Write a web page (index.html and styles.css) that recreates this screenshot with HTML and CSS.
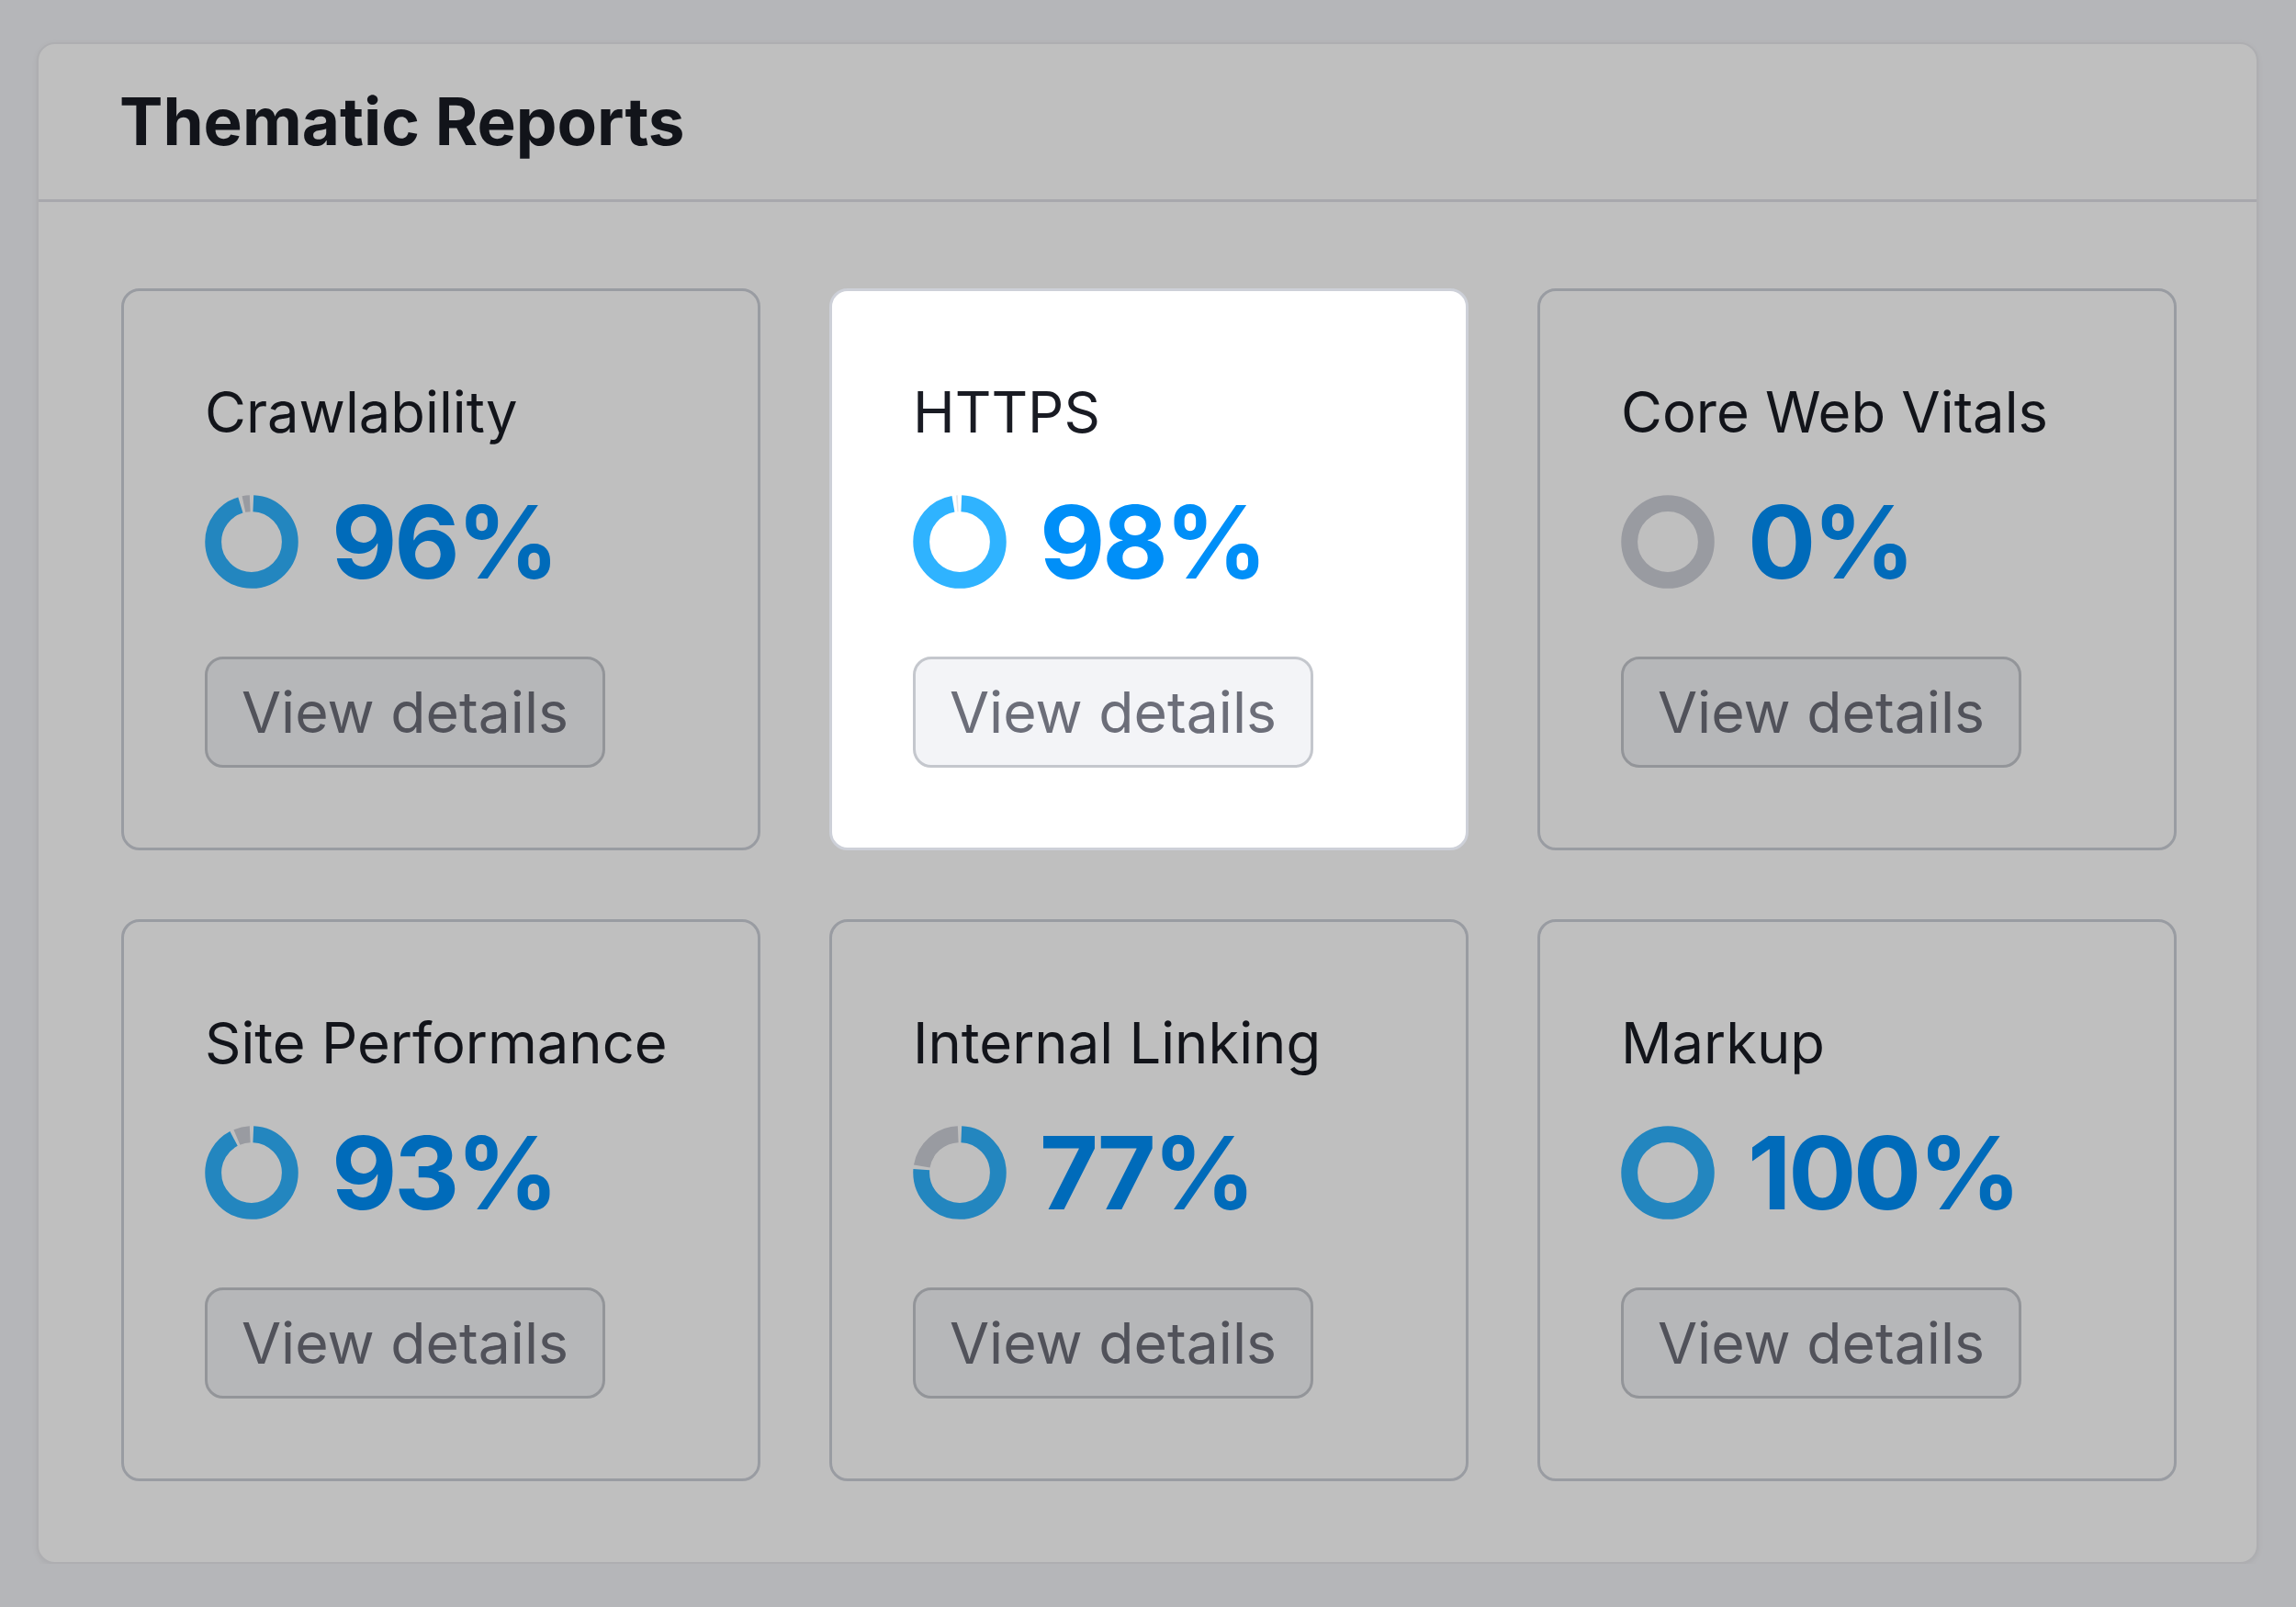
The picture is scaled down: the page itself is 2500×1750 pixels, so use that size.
FILE: index.html
```html
<!DOCTYPE html>
<html lang="en">
<head>
    <meta charset="UTF-8">
    <meta name="viewport" content="width=device-width, initial-scale=1.0">
    <title>Thematic Reports</title>
    <link rel="stylesheet" href="styles.css">
</head>
<body>
    <section class="panel">
        <header class="panel-header">
            <h2 class="panel-title">Thematic Reports</h2>
        </header>

        <div class="report-grid">
            <article class="report-card">
                <h3 class="report-name">Crawlability</h3>
                <div class="report-score">
                    <svg class="score-ring" viewBox="0 0 100 100" aria-hidden="true">
                        <circle class="ring-rest" cx="50" cy="50" r="41" pathLength="100" stroke-dasharray="2.6 100" stroke-dashoffset="-96.7"/>
                        <circle class="ring-done" cx="50" cy="50" r="41" pathLength="100" stroke-dasharray="94.6 100" stroke-dashoffset="-0.7"/>
                    </svg>
                    <span class="score-value">96%</span>
                </div>
                <button class="details-btn" type="button">View details</button>
            </article>

            <!-- highlighted by the onboarding tour -->
            <article class="report-card is-spotlight">
                <h3 class="report-name">HTTPS</h3>
                <div class="report-score">
                    <svg class="score-ring" viewBox="0 0 100 100" aria-hidden="true">
                        <circle class="ring-rest" cx="50" cy="50" r="41" pathLength="100" stroke-dasharray="0.6 100" stroke-dashoffset="-98.7"/>
                        <circle class="ring-done" cx="50" cy="50" r="41" pathLength="100" stroke-dasharray="96.6 100" stroke-dashoffset="-0.7"/>
                    </svg>
                    <span class="score-value">98%</span>
                </div>
                <button class="details-btn" type="button">View details</button>
            </article>

            <article class="report-card">
                <h3 class="report-name">Core Web Vitals</h3>
                <div class="report-score">
                    <svg class="score-ring" viewBox="0 0 100 100" aria-hidden="true">
                        <circle class="ring-rest" cx="50" cy="50" r="41"/>
                    </svg>
                    <span class="score-value">0%</span>
                </div>
                <button class="details-btn" type="button">View details</button>
            </article>

            <article class="report-card">
                <h3 class="report-name">Site Performance</h3>
                <div class="report-score">
                    <svg class="score-ring" viewBox="0 0 100 100" aria-hidden="true">
                        <circle class="ring-rest" cx="50" cy="50" r="41" pathLength="100" stroke-dasharray="5.6 100" stroke-dashoffset="-93.7"/>
                        <circle class="ring-done" cx="50" cy="50" r="41" pathLength="100" stroke-dasharray="91.6 100" stroke-dashoffset="-0.7"/>
                    </svg>
                    <span class="score-value">93%</span>
                </div>
                <button class="details-btn" type="button">View details</button>
            </article>

            <article class="report-card">
                <h3 class="report-name">Internal Linking</h3>
                <div class="report-score">
                    <svg class="score-ring" viewBox="0 0 100 100" aria-hidden="true">
                        <circle class="ring-rest" cx="50" cy="50" r="41" pathLength="100" stroke-dasharray="21.6 100" stroke-dashoffset="-77.7"/>
                        <circle class="ring-done" cx="50" cy="50" r="41" pathLength="100" stroke-dasharray="75.6 100" stroke-dashoffset="-0.7"/>
                    </svg>
                    <span class="score-value">77%</span>
                </div>
                <button class="details-btn" type="button">View details</button>
            </article>

            <article class="report-card">
                <h3 class="report-name">Markup</h3>
                <div class="report-score">
                    <svg class="score-ring" viewBox="0 0 100 100" aria-hidden="true">
                        <circle class="ring-done" cx="50" cy="50" r="41"/>
                    </svg>
                    <span class="score-value">100%</span>
                </div>
                <button class="details-btn" type="button">View details</button>
            </article>
        </div>
    </section>

    <!-- Tour backdrop: dims everything except the spotlight card -->
    <div class="tour-backdrop"></div>
</body>
</html>
```

FILE: styles.css
```css
body {
    margin: 0;
    padding: 46px 41px 0 40px;
    background: #f2f3f7;
    font-family: 'Inter', 'Noto Sans', sans-serif;
    color: #191b23;
}

.panel {
    background: #ffffff;
    border: 2px solid #e8e9ed;
    border-radius: 20px;
    box-shadow: 0 2px 6px rgba(0, 0, 0, 0.06);
}

.panel-header {
    padding: 41px 90px 42px 88px;
    border-bottom: 3px solid #e0e1e7;
}

.panel-title {
    margin: 0;
    font-size: 71px;
    line-height: 86px;
    font-weight: 700;
    color: #191b23;
}

.report-grid {
    display: grid;
    grid-template-columns: repeat(3, 1fr);
    column-gap: 75px;
    row-gap: 75px;
    padding: 94px 87px 88px 90px;
}

.report-card {
    display: flex;
    flex-direction: column;
    align-items: flex-start;
    padding: 94px 40px 87px 88px;
    background: #ffffff;
    border: 3px solid #cdd0d8;
    border-radius: 20px;
}

.report-name {
    margin: 0;
    font-size: 61.5px;
    line-height: 76px;
    font-weight: 400;
    color: #191b23;
}

.report-score {
    display: flex;
    align-items: center;
    gap: 36px;
    height: 110px;
    margin-top: 48px;
}

.score-ring {
    width: 102px;
    height: 102px;
    flex-shrink: 0;
}

.score-ring circle {
    fill: none;
    stroke-width: 17.5;
    transform: rotate(-90deg);
    transform-origin: 50% 50%;
}

.ring-done {
    stroke: #2fb3ff;
}

.ring-rest {
    stroke: #cdcfd7;
}

.is-spotlight .ring-rest {
    stroke: #e6e7ec;
}

.score-value {
    font-size: 110px;
    line-height: 110px;
    font-weight: 700;
    letter-spacing: -0.03em;
    color: #008ff8;
}

.details-btn {
    margin-top: 70px;
    padding: 0 37px;
    height: 121px;
    background: #f3f4f7;
    border: 3px solid #c4c7cd;
    border-radius: 20px;
    font-family: inherit;
    font-size: 62.5px;
    line-height: 115px;
    color: #6c6e79;
    cursor: pointer;
}

.tour-backdrop {
    position: fixed;
    inset: 0;
    z-index: 10;
    background: rgba(0, 0, 0, 0.25);
    pointer-events: none;
}

.is-spotlight {
    position: relative;
    z-index: 11;
}
```
